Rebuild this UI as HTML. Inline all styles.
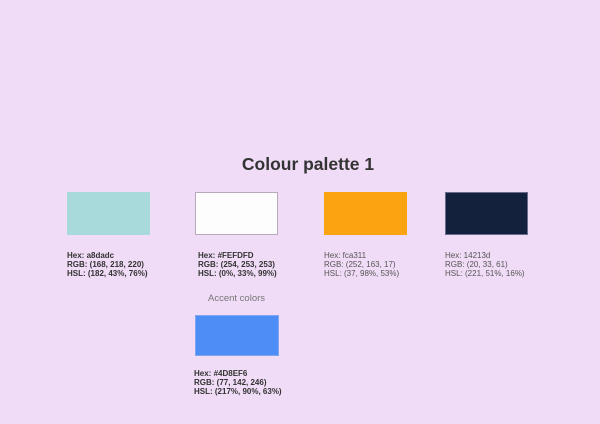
<!DOCTYPE html>
<html><head><style>
body{margin:0;width:600px;height:424px;background:#f0dcf6;font-family:"Liberation Sans",sans-serif;position:relative;overflow:hidden}
.a{position:absolute}
.sw{position:absolute;width:83px;height:43px;box-sizing:border-box}
.t{position:absolute;font-size:8px;line-height:9px;color:#333;white-space:nowrap}
.g{color:#555}
</style></head><body>
<div class="a" style="left:0;width:600px;top:154px;text-align:center;font-size:17.5px;font-weight:bold;color:#333;padding-left:8px">Colour palette 1</div>

<div class="sw" style="left:67px;top:192px;background:#a8dadc"></div>
<div class="sw" style="left:195px;top:192px;background:#fefdfd;border:1px solid #b9a9bd"></div>
<div class="sw" style="left:324px;top:192px;background:#fca311"></div>
<div class="sw" style="left:445px;top:192px;background:#14213d;border:1px solid #6a6a90"></div>

<div class="t" style="left:67px;top:251px;font-weight:bold">Hex: a8dadc<br>RGB: (168, 218, 220)<br>HSL: (182, 43%, 76%)</div>
<div class="t" style="left:198px;top:251px;font-weight:bold">Hex: #FEFDFD<br>RGB: (254, 253, 253)<br>HSL: (0%, 33%, 99%)</div>
<div class="t g" style="left:324px;top:251px">Hex: fca311<br>RGB: (252, 163, 17)<br>HSL: (37, 98%, 53%)</div>
<div class="t g" style="left:445px;top:251px">Hex: 14213d<br>RGB: (20, 33, 61)<br>HSL: (221, 51%, 16%)</div>

<div class="a" style="left:208px;top:293px;font-size:9.5px;color:#777">Accent colors</div>
<div class="sw" style="left:195px;top:315px;width:84px;height:41px;background:#4d8ef6;border:1px solid #7fa6ee"></div>
<div class="t" style="left:194px;top:369px;font-weight:bold">Hex: #4D8EF6<br>RGB: (77, 142, 246)<br>HSL: (217%, 90%, 63%)</div>
</body></html>
